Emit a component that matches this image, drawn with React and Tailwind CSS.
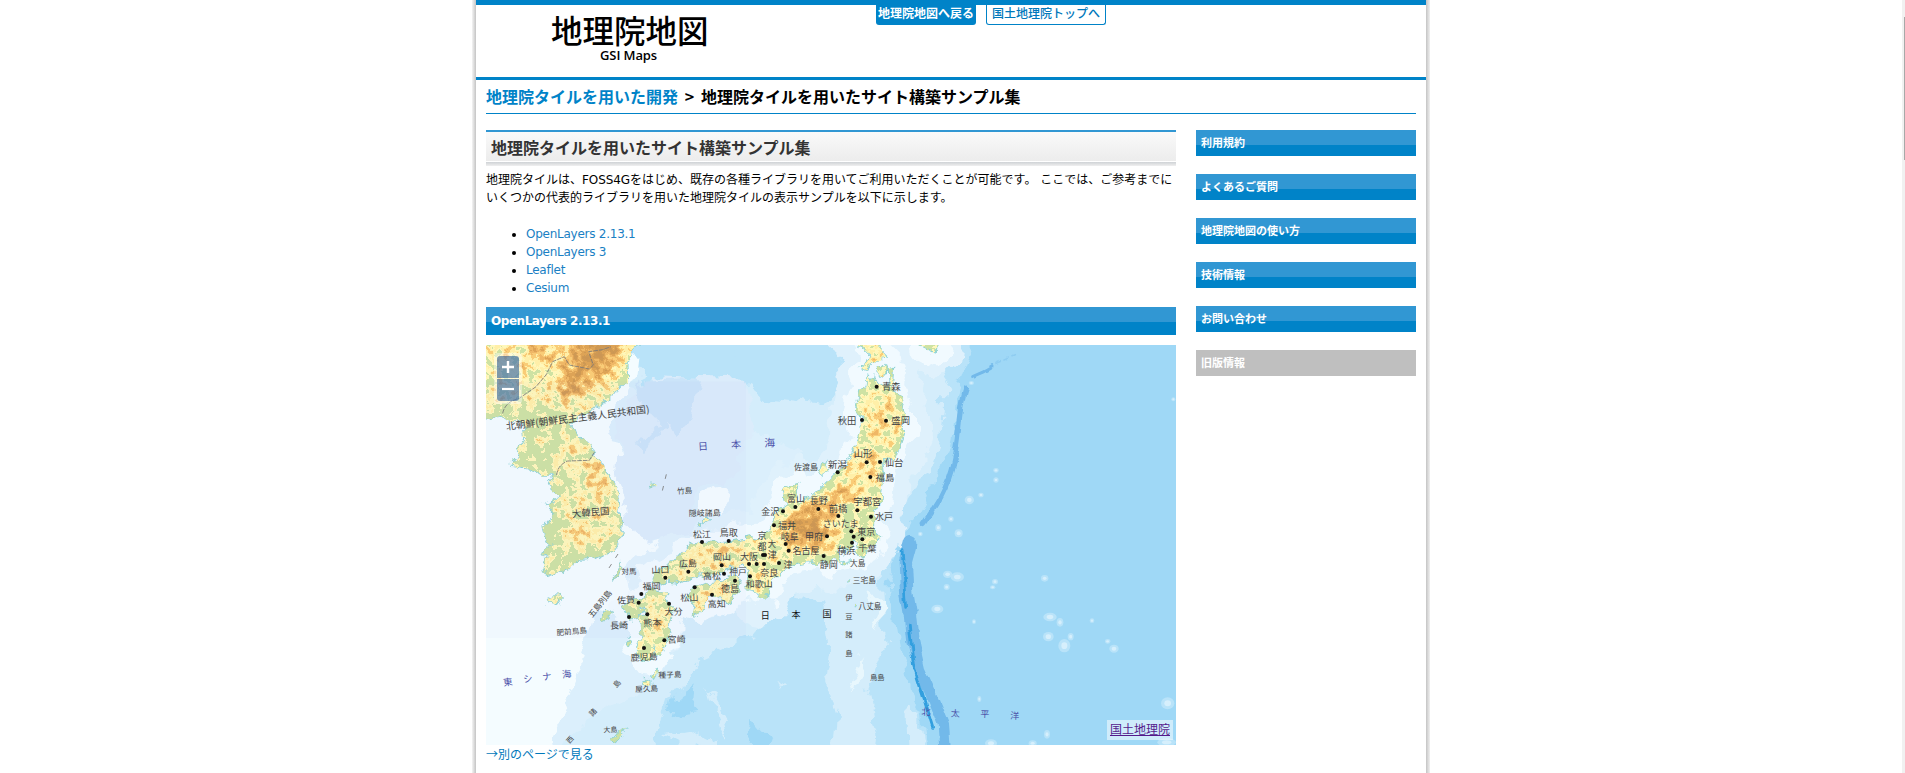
import React from "react";

const KOREA =
  "M-20,-20 L470,-20 457,0 440,30 422,55 424,110 405,130 382,145 352,175 300,205 270,220 260,240 272,270 312,305 327,330 345,360 362,385 382,415 392,435 400,495 407,545 400,590 382,615 332,640 282,645 252,670 202,690 172,680 182,645 167,625 207,595 187,605 172,545 207,505 177,475 222,455 187,425 207,390 162,390 132,370 77,360 92,330 117,285 112,235 72,220 47,210 0,215 -20,215 Z";
const HONSHU =
  "M1147,90 L1162,112 1167,92 1176,118 1192,125 1210,115 1208,82 1182,90 1177,72 1197,60 1206,80 1222,72 1218,125 1242,165 1254,205 1254,265 1240,305 1224,345 1204,337 1187,355 1194,405 1187,465 1162,505 1162,545 1180,575 1160,598 1140,625 1118,632 1108,620 1116,602 1098,588 1086,620 1066,606 1050,612 1066,640 1072,650 1048,646 1027,655 982,650 932,660 882,685 857,705 842,750 817,755 792,725 782,700 792,675 772,655 752,660 702,685 660,690 622,695 582,715 542,710 502,715 497,690 522,670 562,650 602,605 652,590 722,590 792,575 827,585 847,555 862,530 882,495 904,480 892,435 912,425 942,415 927,440 932,475 972,460 1012,425 1052,385 1082,355 1102,315 1122,275 1132,225 1107,205 1117,165 1122,135 1144,132 Z";
const KYUSHU =
  "M467,750 L492,735 532,740 554,745 542,770 562,790 562,825 542,885 532,920 507,930 500,905 492,950 468,948 452,915 462,885 472,845 457,815 482,810 472,790 452,820 432,825 427,800 412,780 432,770 447,765 Z";
const SHIKOKU =
  "M602,755 L627,730 662,715 702,710 747,695 762,715 752,745 727,775 698,752 672,762 652,785 637,810 617,805 622,775 Z";
const HOKKAIDO = "M1117,-20 L1120,5 1150,18 1147,40 1127,65 1142,70 1162,45 1202,35 1177,10 1187,-20 Z M1300,-20 L1307,2 1347,22 1350,-20 Z";
const ISLANDS =
  "M176,765 Q185,750 215,750 Q240,755 225,768 Q200,780 176,765 Z M385,705 L392,675 402,655 404,672 392,700 Z M1002,385 L1008,355 1022,348 1018,368 1024,375 1010,392 Z M345,822 L362,800 380,795 368,818 350,827 Z M498,1005 L506,975 513,972 508,998 Z M465,1008 a10,8 0 1 0 20,2 a10,8 0 1 0 -20,-2 Z M383,1180 L395,1165 420,1155 410,1170 390,1186 Z M653,525 a8,7 0 1 0 16,0 a8,7 0 1 0 -16,0 Z M640,538 a6,5 0 1 0 12,0 a6,5 0 1 0 -12,0 Z M493,418 a4,4 0 1 0 8,0 a4,4 0 1 0 -8,0 Z M1078,652 a4,5 0 1 0 8,0 a4,5 0 1 0 -8,0 Z M1086,706 a3,4 0 1 0 6,0 a3,4 0 1 0 -6,0 Z M1104,786 a3,4 0 1 0 6,0 a3,4 0 1 0 -6,0 Z M422,900 L432,885 436,890 425,905 Z";
const LAND = [KOREA, HONSHU, KYUSHU, SHIKOKU, HOKKAIDO, ISLANDS].join(" ");

/* text, centre x, centre y, size, rotation */
const LABELS = [
  ["北朝鮮(朝鮮民主主義人民共和国)", 275, 218, 29.5, -7],
  ["大韓民国", 314, 502, 28, -5],
  ["竹島", 596, 437, 23, -3],
  ["隠岐諸島", 656, 504, 24, -1],
  ["松江", 648, 568, 27, -2],
  ["鳥取", 728, 563, 27, 0],
  ["青森", 1216, 124, 28, 0],
  ["秋田", 1083, 226, 28, 0],
  ["盛岡", 1244, 226, 28, 0],
  ["山形", 1131, 325, 28, 0],
  ["仙台", 1224, 352, 28, 0],
  ["福島", 1197, 398, 28, 1],
  ["新潟", 1054, 358, 28, 0],
  ["佐渡島", 960, 367, 24, 0],
  ["富山", 930, 460, 27, 0],
  ["長野", 998, 466, 27, 0],
  ["金沢", 853, 500, 27, 0],
  ["前橋", 1056, 490, 28, 0],
  ["宇都宮", 1144, 471, 28, 0],
  ["水戸", 1194, 515, 27, 0],
  ["さいたま", 1064, 537, 27, 0],
  ["東京", 1141, 561, 27, 0],
  ["福井", 903, 541, 27, 0],
  ["岐阜", 911, 574, 27, 0],
  ["甲府", 984, 574, 27, 0],
  ["京", 828, 571, 27, 0],
  ["都", 828, 605, 27, 0],
  ["大", 858, 598, 25, 0],
  ["津", 859, 629, 27, 0],
  ["名古屋", 960, 616, 27, 0],
  ["横浜", 1081, 618, 27, 0],
  ["千葉", 1144, 610, 27, 2],
  ["大島", 1115, 654, 23, 0],
  ["静岡", 1028, 658, 27, 0],
  ["津", 906, 660, 26, 0],
  ["岡山", 708, 636, 27, -1],
  ["大阪", 789, 634, 27, 0],
  ["神戸", 756, 679, 26, 0],
  ["奈良", 850, 682, 27, 0],
  ["高松", 678, 693, 27, -1],
  ["和歌山", 820, 717, 27, -1],
  ["徳島", 732, 732, 27, 0],
  ["高知", 692, 777, 27, -1],
  ["三宅島", 1135, 706, 23, 0],
  ["八丈島", 1152, 784, 23, 0],
  ["伊", 1089, 757, 22, 0],
  ["豆", 1089, 815, 22, 0],
  ["諸", 1089, 869, 22, 0],
  ["島", 1089, 925, 22, 0],
  ["鳥島", 1174, 997, 22, 0],
  ["広島", 606, 655, 27, -2],
  ["山口", 523, 674, 27, -2],
  ["対馬", 429, 679, 23, -2],
  ["福岡", 497, 724, 27, -3],
  ["佐賀", 420, 765, 27, -3],
  ["松山", 610, 758, 27, -2],
  ["大分", 563, 800, 27, -2],
  ["長崎", 399, 841, 27, -3],
  ["熊本", 499, 833, 27, -2],
  ["宮崎", 572, 883, 27, -2],
  ["鹿児島", 474, 936, 27, -3],
  ["種子島", 552, 989, 23, -2],
  ["屋久島", 482, 1031, 23, -2],
  ["大島", 373, 1154, 21, -2],
  ["五島列島", 342, 776, 24, -51],
  ["肥前鳥島", 257, 859, 23, -5],
  ["島", 393, 1016, 22, -48],
  ["諸", 321, 1102, 22, -48],
  ["西", 252, 1184, 21, -48],
];
const SEA_LABELS = [
  ["日", 651, 304, 30, -4],
  ["本", 750, 298, 30, -3],
  ["海", 851, 293, 32, -2],
  ["東", 66, 1011, 28, -8],
  ["シ", 126, 1001, 28, -8],
  ["ナ", 183, 994, 28, -8],
  ["海", 242, 987, 28, -8],
  ["北", 1320, 1100, 28, 2],
  ["太", 1408, 1105, 27, 2],
  ["平", 1497, 1107, 27, 2],
  ["洋", 1586, 1112, 27, 4],
];
const COUNTRY = [
  ["日", 838, 811, 27, 0],
  ["本", 930, 809, 27, 0],
  ["国", 1023, 807, 27, 0],
];
const CITIES = [
  [1172, 125], [1128, 225], [1200, 227], [1142, 352], [1182, 351], [1153, 396], [1055, 382], [928, 486], [997, 492],
  [891, 499], [1057, 513], [1114, 496], [1155, 515], [864, 541], [899, 597], [1023, 574], [1096, 559], [1103, 575],
  [1098, 593], [1129, 583], [728, 588], [648, 591], [908, 617], [1013, 633], [879, 654], [831, 630], [837, 630],
  [812, 657], [789, 657], [834, 657], [792, 694], [747, 707], [714, 686], [707, 661], [678, 749], [607, 680],
  [538, 698], [626, 727], [466, 747], [458, 773], [549, 776], [484, 808], [429, 816], [535, 886], [474, 909],
];
const SEAMOUNTS = [
  [1385, 688, 14, 11], [1414, 696, 20, 14], [1382, 726, 9, 9], [1527, 710, 9, 8], [1520, 727, 8, 6], [1676, 700, 11, 10],
  [1354, 792, 18, 13], [1464, 830, 6, 7], [1692, 816, 20, 13], [1722, 832, 10, 13], [1687, 875, 16, 14],
  [1754, 875, 9, 11], [1735, 902, 18, 20], [1818, 827, 7, 7], [1865, 889, 8, 7], [1884, 911, 14, 12],
  [2045, 1075, 20, 18], [1480, 1062, 6, 9], [1683, 1168, 9, 13], [1515, 1195, 18, 12], [1640, 1195, 12, 9],
  [2042, 1192, 28, 12], [1450, 465, 14, 13], [1485, 450, 8, 7], [1530, 376, 8, 7], [1418, 565, 12, 12],
  [1357, 548, 9, 10], [1395, 522, 8, 8], [1530, 405, 8, 8], [1303, 567, 7, 7], [2062, 163, 6, 6], [1456, 114, 8, 6],
];

function MapText({ items, fill }) {
  return items.map(([t, x, y, s, r], i) => (
    <text key={i} x={x} y={y + s * 0.37} fontSize={s} fill={fill} textAnchor="middle" transform={`rotate(${r} ${x} ${y})`}>
      {t}
    </text>
  ));
}

function JapanMap() {
  return (
    <svg viewBox="0 0 2070 1200" width="690" height="400" className="block" fontFamily="'Noto Sans CJK JP', sans-serif">
      <defs>
        <filter id="coast" filterUnits="userSpaceOnUse" x="-60" y="-60" width="2190" height="1320">
          <feTurbulence type="fractalNoise" baseFrequency="0.035" numOctaves="4" seed="4" result="n" />
          <feDisplacementMap in="SourceGraphic" in2="n" scale="34" xChannelSelector="R" yChannelSelector="G" />
        </filter>
        <filter id="trench" filterUnits="userSpaceOnUse" x="-60" y="-60" width="2190" height="1320">
          <feTurbulence type="fractalNoise" baseFrequency="0.018" numOctaves="3" seed="7" result="n" />
          <feDisplacementMap in="SourceGraphic" in2="n" scale="22" xChannelSelector="R" yChannelSelector="G" />
        </filter>
        <filter id="depth" filterUnits="userSpaceOnUse" x="-60" y="-60" width="2190" height="1320">
          <feTurbulence type="fractalNoise" baseFrequency="0.014" numOctaves="4" seed="9" result="n" />
          <feDisplacementMap in="SourceGraphic" in2="n" scale="80" xChannelSelector="R" yChannelSelector="G" />
        </filter>
        <filter id="relief" filterUnits="userSpaceOnUse" x="-60" y="-60" width="2190" height="1320" colorInterpolationFilters="sRGB">
          <feGaussianBlur in="SourceGraphic" stdDeviation="14" result="e" />
          <feTurbulence type="fractalNoise" baseFrequency="0.04" numOctaves="5" seed="12" />
          <feColorMatrix type="matrix" values="1 0 0 0 0  1 0 0 0 0  1 0 0 0 0  0 0 0 0 1" result="n" />
          <feComposite in="e" in2="n" operator="arithmetic" k2="1" k3="0.8" k4="-0.4" />
          <feComponentTransfer>
            <feFuncR type="discrete" tableValues="0.81 0.81 0.81 1 1 0.98 0.94 0.87 0.81 0.80" />
            <feFuncG type="discrete" tableValues="0.89 0.89 0.89 0.97 0.94 0.80 0.72 0.64 0.60 0.59" />
            <feFuncB type="discrete" tableValues="0.64 0.64 0.64 0.73 0.66 0.47 0.40 0.34 0.33 0.33" />
          </feComponentTransfer>
        </filter>
        <mask id="land" maskUnits="userSpaceOnUse" x="-60" y="-60" width="2190" height="1320">
          <path d={LAND} fill="#fff" filter="url(#coast)" />
        </mask>
      </defs>

      <rect width="2070" height="1200" fill="#9fd8f6" />
      <g filter="url(#depth)">
        <path d="M-80,-80 L1490,-80 1440,60 1410,150 1390,300 1350,420 1290,520 1240,600 1210,700 1220,800 1235,900 1260,1020 1310,1120 1330,1290 -80,1290 Z" fill="#b9e3f9" />
        <path d="M1260,-80 L1450,-80 1400,60 1370,150 1360,280 1310,400 1230,520 1180,600 1190,680 1195,800 1205,900 1150,1040 1180,1180 1170,1290 1040,1290 1050,1100 1020,1000 1035,900 1010,760 900,750 800,860 650,930 560,1050 480,1290 -80,1290 -80,-80 410,-80 440,80 560,150 800,120 850,160 1020,180 1080,80 1120,-80 Z" fill="#d4edfb" />
        <path d="M1255,1085 L1300,1120 1320,1290 1260,1290 Z" fill="#d4edfb" />
        <path d="M-80,-80 L470,-80 430,120 600,170 790,260 900,300 960,330 850,480 700,600 600,740 580,900 470,1040 300,1120 200,1290 -80,1290 Z" fill="#dbeffc" />
        <path d="M-80,-80 L460,-80 440,100 380,260 430,500 480,590 620,560 660,440 720,430 700,560 600,700 560,860 330,800 280,960 200,1180 140,1290 -80,1290 Z" fill="#f4fcff" />
        <path d="M1120,940 L1125,1000 1115,1060 1100,1000 Z M1150,760 L1200,780 1180,860 Z" fill="#e8f7fd" />
        <path d="M572,1050 L620,1020 612,1110 560,1120 Z M800,1120 L850,1180 820,1200 790,1160 Z" fill="#9fd8f6" />
        <path d="M880,1000 L910,1030 890,1030 Z M660,1030 L710,1120 730,1190 690,1130 Z M540,1180 L650,1160 700,1185 600,1210 Z" fill="#d4edfb" />
        <path d="M470,-30 L500,40 580,90 570,130 620,130 700,130 760,60 750,-30 Z" fill="#b9e3f9" />
        <path d={[HONSHU, HOKKAIDO].join(" ")} fill="none" stroke="#dff1fc" strokeWidth="150" strokeLinejoin="round" />
        <path d={[HONSHU, KYUSHU, SHIKOKU, HOKKAIDO].join(" ")} fill="#f1faff" stroke="#f1faff" strokeWidth="66" strokeLinejoin="round" />
        <path d="M400,240 L450,160 520,100 780,110 800,200 780,300 720,420 640,420 600,560 470,590 430,520 390,380 Z" fill="#dbecfb" />
        <path d="M460,110 L640,105 620,230 570,270 530,220 480,320 450,300 510,230 Z" fill="#cbe4f9" />
      </g>
      <g filter="url(#trench)" fill="none" strokeLinejoin="round" strokeLinecap="round">
        <path d="M1460,92 C1490,78 1500,75 1518,62" stroke="#72b9ea" strokeWidth="9" />
        <path d="M1530,55 L1585,32" stroke="#8fcdf1" strokeWidth="5" strokeDasharray="14 12" />
        <path d="M1438,130 C1415,190 1422,270 1402,350 C1385,430 1350,480 1312,535" stroke="#72b9ea" strokeWidth="16" />
        <path d="M1274,590 L1258,650 1262,740 1272,800" stroke="#72b9ea" strokeWidth="40" />
        <path d="M1272,800 L1280,880 1300,970 1340,1060 1372,1140 1378,1220" stroke="#72b9ea" strokeWidth="34" />
        <path d="M1248,620 L1256,700 1262,790 M1270,840 L1282,960 1310,1050 1340,1150" stroke="#309fdf" strokeWidth="8" />
      </g>
      <g>
        {SEAMOUNTS.map(([x, y, a, b], i) => (
          <g key={i}>
            <ellipse cx={x} cy={y} rx={a} ry={b} fill="#b9e3f9" />
            <ellipse cx={x} cy={y} rx={a * 0.5} ry={b * 0.5} fill="#d6effc" />
          </g>
        ))}
      </g>

      <path d={LAND} fill="#8fd3d2" stroke="#8fd3d6" strokeWidth="5" filter="url(#coast)" />
      <g mask="url(#land)">
        <g filter="url(#relief)">
          <rect x="-60" y="-60" width="2190" height="1320" fill="#3e3e3e" />
          <g fill="#606060">
            <path d="M-60,-60 H480 L420,110 270,210 200,180 60,180 -60,180 Z M250,240 L330,340 400,460 395,560 350,600 240,600 230,480 270,420 200,340 Z" />
            <path d="M1130,130 L1220,130 1240,200 1235,300 1200,340 1180,480 1100,480 1040,420 1110,330 1130,250 Z" />
            <path d="M520,690 L600,610 820,590 900,620 830,740 790,660 Z M470,760 L550,760 545,890 500,930 470,900 500,820 Z M620,740 L750,705 740,760 640,800 Z" />
            <path d="M1120,-20 H1200 V70 H1120 Z M180,752 h50 v22 h-50 Z" />
          </g>
          <g fill="#8a8a8a">
            <path d="M60,-60 L440,-60 400,70 330,140 240,180 200,120 220,70 120,40 Z" />
            <path d="M1200,170 L1235,190 1225,270 1195,250 Z M1150,160 h26 v130 h-20 Z M1100,320 h25 v80 h-35 Z M1145,300 h20 v110 h-16 Z" />
            <path d="M880,520 L960,470 1010,460 1080,420 1140,420 1110,470 1060,500 1060,590 1030,630 930,620 870,600 Z" />
            <path d="M600,640 L700,605 740,610 700,640 600,670 Z M505,790 L540,800 530,860 500,850 Z M640,745 L745,715 730,745 650,770 Z M800,690 L845,690 825,740 Z" />
            <path d="M300,330 L345,360 380,440 340,450 310,390 Z M255,570 L290,560 290,610 250,610 Z M190,758 h26 v10 h-26 Z M468,1004 h14 v12 h-14 Z" />
          </g>
          <g fill="#c4c4c4">
            <path d="M290,-40 L420,-40 380,70 310,90 250,160 225,140 250,80 Z" />
            <path d="M920,500 L980,470 1005,520 1010,600 950,600 900,560 Z M1010,450 L1080,430 1060,460 1020,480 Z" />
          </g>
        </g>
      </g>
      <rect x="-10" y="110" width="790" height="769" fill="#8a90e8" opacity="0.035" />

      <g fill="none" stroke="#777" strokeWidth="2.5" strokeDasharray="14 3">
        <path d="M50,205 C55,180 75,165 100,160 L150,125 180,90 200,50 235,35 250,60 310,72 322,60 308,20 350,14 375,5" />
        <path d="M212,390 Q215,360 245,348 L310,346 325,322" />
        <path d="M541,388 L524,458 M396,627 L358,686" strokeDasharray="14 22" />
      </g>
      <g fill="#111">
        {CITIES.map(([x, y], i) => (
          <circle key={i} cx={x} cy={y} r="6" />
        ))}
      </g>
      <MapText items={LABELS} fill="#444" />
      <MapText items={SEA_LABELS} fill="#4a4fa8" />
      <MapText items={COUNTRY} fill="#111" />
    </svg>
  );
}

const SIDE = ["利用規約", "よくあるご質問", "地理院地図の使い方", "技術情報", "お問い合わせ"];

export default function App() {
  return (
    <div className="flex h-[773px] w-[1905px] overflow-hidden bg-white font-['DejaVu_Sans','Noto_Sans_CJK_JP',sans-serif] text-xs leading-[18px] text-black">
      <div className="flex w-[1902px] justify-center">
        <div className="w-1 bg-linear-to-r from-[#f4f4f4] to-[#c4c4c4]" />
        <div className="w-[950px]">
          <header className="flex h-20 border-t-5 border-b-3 border-[#0083c8]">
            <div className="flex w-[400px] flex-col pl-[75px]">
              <div className="mt-2 h-9 text-[31.5px] leading-[32px] font-medium whitespace-nowrap font-['Noto_Sans_CJK_JP',sans-serif]">地理院地図</div>
              <div className="pl-[49px] text-[13px] leading-[12px] font-semibold tracking-[-0.1px] font-['Open_Sans',sans-serif]">GSI Maps</div>
            </div>
            <nav className="flex gap-2.5">
              <a className="flex h-5 w-[100px] items-center justify-center rounded-b-[3px] bg-[#0083c8] pb-0.5 font-bold whitespace-nowrap text-white">地理院地図へ戻る</a>
              <a className="flex h-5 w-[120px] items-center justify-center rounded-b-[3px] border border-t-0 border-[#0083c8] pb-px font-medium whitespace-nowrap text-[#0078bb]">国土地理院トップへ</a>
            </nav>
          </header>
          <div className="mx-2.5 h-[34px] border-b border-[#0083c8] pt-1 text-base leading-6 font-bold whitespace-nowrap">
            <a className="text-[#0083c8]">地理院タイルを用いた開発</a>
            <span className="inline-block w-[23px] text-center font-['Noto_Sans_CJK_JP',sans-serif]">&gt;</span>地理院タイルを用いたサイト構築サンプル集
          </div>
          <div className="flex gap-5 px-2.5 pt-4">
            <main className="w-[690px]">
              <h1 className="h-[31px] border-t-2 border-[#3197d3] bg-linear-to-b from-[#fafafa] to-[#ececec] pl-[5px] text-base leading-[34px] font-bold text-[#333]">地理院タイルを用いたサイト構築サンプル集</h1>
              <div className="mt-px h-1 bg-linear-to-b from-[#ced2d5] to-[#f0f0f0]" />
              <p className="mt-[5px] h-9 whitespace-nowrap">
                地理院タイルは、<span className="tracking-[-0.1px]">FOSS4G</span>をはじめ、既存の各種ライブラリを用いてご利用いただくことが可能です。 ここでは、ご参考までに
                <br />
                いくつかの代表的ライブラリを用いた地理院タイルの表示サンプルを以下に示します。
              </p>
              <ul className="mt-[18px] list-disc pl-10 tracking-[-0.25px] text-[#1a7fc4] marker:text-black">
                <li>OpenLayers 2.13.1</li>
                <li>OpenLayers 3</li>
                <li>Leaflet</li>
                <li>Cesium</li>
              </ul>
              <h2 className="mt-2.5 h-7 bg-linear-to-b from-[#3197d3] from-[54%] to-[#0083c8] to-[54%] pl-[5px] leading-7 font-bold tracking-[-0.45px] text-white">OpenLayers 2.13.1</h2>
              <div className="relative mt-2.5 h-[400px] overflow-hidden">
                <JapanMap />
                <div className="absolute top-2 left-2 flex flex-col gap-px rounded bg-white/40 p-[3px]">
                  <button className="flex size-[22px] items-center justify-center rounded-t-[3px] bg-[#003c88]/50">
                    <svg width="12" height="12" viewBox="0 0 12 12" stroke="#fff" strokeWidth="2.4"><path d="M6 0v12M0 6h12" /></svg>
                  </button>
                  <button className="flex size-[22px] items-center justify-center rounded-b-[3px] bg-[#003c88]/50">
                    <svg width="12" height="12" viewBox="0 0 12 12" stroke="#fff" strokeWidth="2.2"><path d="M0 5h12" /></svg>
                  </button>
                </div>
                <div className="absolute right-[3px] bottom-[5px] flex h-5 w-[66px] items-center justify-center bg-white/50 whitespace-nowrap text-[#551a8b] underline">国土地理院</div>
              </div>
              <a className="block text-[#0078bb]"><span className="font-['Noto_Sans_CJK_JP',sans-serif]">→</span>別のページで見る</a>
            </main>
            <aside className="flex w-[220px] flex-col gap-[18px] text-[11px] leading-[28px] font-bold text-white">
              {SIDE.map((t) => (
                <a key={t} className="h-[26px] bg-linear-to-b from-[#3197d3] from-[58%] to-[#0083c8] to-[58%] pl-[5px]">{t}</a>
              ))}
              <a className="h-[26px] bg-[#bfbfbf] pl-[5px]">旧版情報</a>
            </aside>
          </div>
        </div>
        <div className="w-1 bg-linear-to-r from-[#c4c4c4] to-[#f0f0f0]" />
      </div>
      <div className="flex w-[3px] justify-end bg-[#f1f1f1] pt-[17px]">
        <div className="h-[143px] w-px bg-[#a8a8a8]" />
      </div>
    </div>
  );
}
